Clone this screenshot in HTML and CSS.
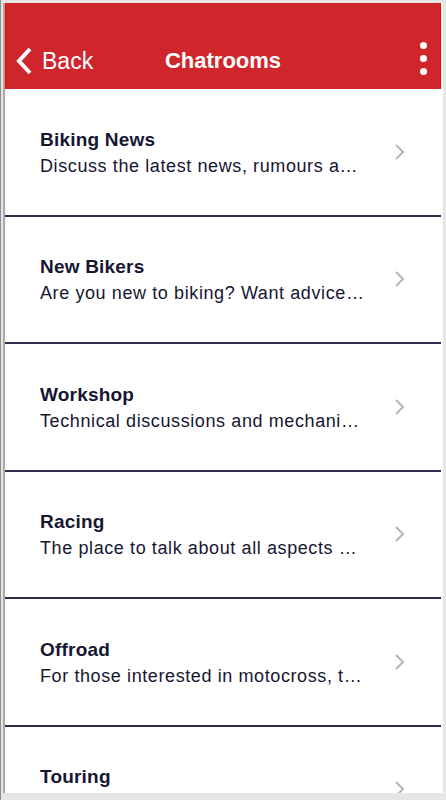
FILE: index.html
```html
<!DOCTYPE html>
<html>
<head>
<meta charset="utf-8">
<link rel="stylesheet" href="styles.css">
</head>
<body>
<div class="frame">
  <div class="app">
    <header class="bar">
      <div class="back">
        <svg class="back-icon" width="18" height="28" viewBox="0 0 18 28"><path d="M14 2 L3 14 L14 26" fill="none" stroke="#fff" stroke-width="4" stroke-linecap="butt" stroke-linejoin="miter"/></svg>
        <span>Back</span>
      </div>
      <div class="title">Chatrooms</div>
      <div class="menu">
        <span class="dot"></span><span class="dot"></span><span class="dot"></span>
      </div>
    </header>
    <ul class="list">
      <li class="row"><div class="txt"><div class="name">Biking News</div><div class="desc">Discuss the latest news, rumours a…</div></div><svg class="chev" width="12" height="18" viewBox="0 0 12 18"><path d="M2 2 L9 9 L2 16" fill="none" stroke="#b4b4b4" stroke-width="2"/></svg></li>
      <li class="row"><div class="txt"><div class="name">New Bikers</div><div class="desc">Are you new to biking? Want advice…</div></div><svg class="chev" width="12" height="18" viewBox="0 0 12 18"><path d="M2 2 L9 9 L2 16" fill="none" stroke="#b4b4b4" stroke-width="2"/></svg></li>
      <li class="row"><div class="txt"><div class="name">Workshop</div><div class="desc">Technical discussions and mechani…</div></div><svg class="chev" width="12" height="18" viewBox="0 0 12 18"><path d="M2 2 L9 9 L2 16" fill="none" stroke="#b4b4b4" stroke-width="2"/></svg></li>
      <li class="row"><div class="txt"><div class="name">Racing</div><div class="desc">The place to talk about all aspects …</div></div><svg class="chev" width="12" height="18" viewBox="0 0 12 18"><path d="M2 2 L9 9 L2 16" fill="none" stroke="#b4b4b4" stroke-width="2"/></svg></li>
      <li class="row"><div class="txt"><div class="name">Offroad</div><div class="desc">For those interested in motocross, t…</div></div><svg class="chev" width="12" height="18" viewBox="0 0 12 18"><path d="M2 2 L9 9 L2 16" fill="none" stroke="#b4b4b4" stroke-width="2"/></svg></li>
      <li class="row"><div class="txt"><div class="name">Touring</div><div class="desc"></div></div><svg class="chev" width="12" height="18" viewBox="0 0 12 18"><path d="M2 2 L9 9 L2 16" fill="none" stroke="#b4b4b4" stroke-width="2"/></svg></li>
    </ul>
  </div>
</div>
</body>
</html>
```
FILE: styles.css
```css
html, body {
  margin: 0;
  padding: 0;
}
body {
  width: 446px;
  height: 800px;
  overflow: hidden;
  font-family: "Liberation Sans", Arial, sans-serif;
}
.frame {
  width: 446px;
  height: 800px;
  box-sizing: border-box;
  background: #e6e6e6;
  padding: 3px 3px 7px 4px;
  border-left: 1px solid #8c8c8c;
}
.app {
  height: 100%;
  background: #fff;
  overflow: hidden;
  border-left: 2px solid #a8a8a8;
  border-right: 2px solid #fdfdfd;
  margin-left: -2px;
}
.bar {
  height: 86px;
  background: #cf262c;
  border-right: 1px solid #f00;
  border-left: 1px solid #f00;
  box-sizing: border-box;
  display: flex;
  align-items: flex-end;
  padding: 0 0 13px 10px;
  position: relative;
  color: #fff;
}
.back {
  display: flex;
  align-items: center;
  gap: 8px;
  font-size: 23px;
  height: 30px;
}
.back-icon {
  display: block;
}
.title {
  position: absolute;
  left: 0;
  right: 0;
  bottom: 13px;
  height: 30px;
  line-height: 30px;
  text-align: center;
  font-size: 22px;
  font-weight: bold;
  pointer-events: none;
}
.menu {
  margin-left: auto;
  display: flex;
  flex-direction: column;
  gap: 6px;
  padding-right: 13px;
  margin-bottom: 1px;
}
.dot {
  width: 7px;
  height: 7px;
  border-radius: 50%;
  background: #fff;
}
.list {
  list-style: none;
  margin: 0;
  padding: 0;
}
.row {
  height: 125.5px;
  border-bottom: 2px solid #2b2e4c;
  display: flex;
  align-items: center;
  padding: 0 35px 0 35px;
  box-sizing: content-box;
}
.txt {
  flex: 1;
  color: #161631;
}
.name {
  font-size: 19px;
  font-weight: bold;
  letter-spacing: 0.2px;
  line-height: 26px;
  margin-bottom: 2px;
}
.desc {
  font-size: 18px;
  letter-spacing: 0.6px;
  line-height: 22px;
  min-height: 22px;
  white-space: nowrap;
}
.chev {
  display: block;
  flex: none;
}
```
